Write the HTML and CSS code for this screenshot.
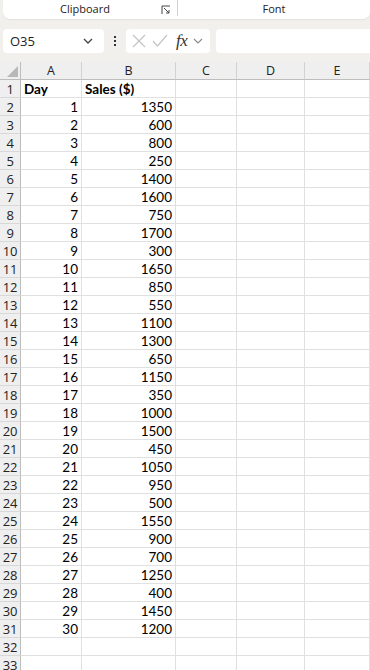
FILE: index.html
```html
<!DOCTYPE html>
<html>
<head>
<meta charset="utf-8">
<link rel="stylesheet" href="styles.css">
</head>
<body>
<div class="app">
  <div class="ribbon">
    <div class="group clip"><span>Clipboard</span>
      <svg class="launcher" width="10" height="10" viewBox="0 0 10 10"><path d="M1 9V1h8" fill="none" stroke="#444" stroke-width="1"/><path d="M3 3l5 5M8 5v3H5" fill="none" stroke="#444" stroke-width="1"/></svg>
    </div>
    <div class="group font"><span>Font</span></div>
  </div>
  <div class="fbar">
    <div class="namebox"><span>O35</span>
      <svg width="12" height="8" viewBox="0 0 12 8"><path d="M2 2l4 4 4-4" fill="none" stroke="#444" stroke-width="1.3"/></svg>
    </div>
    <div class="dots"><i></i><i></i><i></i></div>
    <div class="fxbox">
      <svg width="14" height="14" viewBox="0 0 14 14"><path d="M1 1l12 12M13 1L1 13" stroke="#c4c4c4" stroke-width="1.2"/></svg>
      <svg width="16" height="14" viewBox="0 0 16 14"><path d="M1 7l4.5 5L15 1" fill="none" stroke="#c4c4c4" stroke-width="1.2"/></svg>
      <span class="fx">fx</span>
      <svg width="10" height="8" viewBox="0 0 10 8"><path d="M1 2l4 4 4-4" fill="none" stroke="#888" stroke-width="1.1"/></svg>
    </div>
    <div class="finput"></div>
  </div>
  <div class="sheet" id="sheet">
    <div class="corner"></div>
    <div class="ch">A</div><div class="ch">B</div><div class="ch">C</div><div class="ch">D</div><div class="ch">E</div>
  </div>
</div>
<script>
var sales=[1350,600,800,250,1400,1600,750,1700,300,1650,850,550,1100,1300,650,1150,350,1000,1500,450,1050,950,500,1550,900,700,1250,400,1450,1200];
var s=document.getElementById('sheet');
function cell(cls,txt){var d=document.createElement('div');d.className=cls;d.textContent=txt;s.appendChild(d);}
for(var r=1;r<=33;r++){
  cell('rh',r);
  if(r==1){cell('c b','Day');cell('c b','Sales ($)');}
  else if(r<=31){cell('c n',r-1);cell('c n',sales[r-2]);}
  else{cell('c','');cell('c','');}
  cell('c','');cell('c','');cell('c last','');
}
</script>
</body>
</html>
```
FILE: styles.css
```css
html,body{margin:0;padding:0;}
body{background:#f1f0ec;font-family:"Open Sans","Noto Sans",sans-serif;width:370px;height:670px;overflow:hidden;}
.app{width:370px;}
.ribbon{display:flex;height:19px;margin:0 0 0 3px;background:#fff;border-radius:0 0 7px 7px;box-shadow:0 1px 1px rgba(0,0,0,0.06);}
.group{display:flex;align-items:center;justify-content:center;font-size:11px;color:#222;position:relative;height:16px;}
.clip{width:174px;border-right:1px solid #d0d0d0;}
.clip span{margin-left:0;margin-right:10px;}
.launcher{position:absolute;right:6px;top:5px;}
.font{flex:1;}
.fbar{display:flex;align-items:center;height:24px;margin-top:10px;}
.namebox{margin-left:3px;width:101px;height:24px;background:#fff;border-radius:4px;display:flex;align-items:center;justify-content:space-between;padding:0 10px 0 7px;box-sizing:border-box;font-size:13px;color:#222;}
.dots{width:22px;display:flex;flex-direction:column;align-items:center;gap:2px;}
.dots i{display:block;width:2px;height:2px;background:#333;}
.fxbox{width:84px;height:24px;background:#fff;border-radius:4px;display:flex;align-items:center;padding:0 3px 0 6px;box-sizing:border-box;gap:6px;}
.fx{font-family:"Liberation Serif","DejaVu Serif",serif;font-style:italic;font-size:17px;color:#333;margin-left:2px;letter-spacing:-0.5px;}
.finput{flex:1;height:24px;background:#fff;border-radius:4px 0 0 4px;margin-left:6px;}
.sheet{display:grid;grid-template-columns:21px 61px 94px 61px 68px 65px;grid-auto-rows:18px;margin-top:9px;background:#fff;font-family:"Lato","Open Sans",sans-serif;font-size:13.5px;color:#000;}
.corner{background:#efefef;border-right:1px solid #bdbdbd;border-bottom:1px solid #bdbdbd;box-sizing:border-box;position:relative;}
.corner::after{content:"";position:absolute;right:2px;bottom:2px;width:0;height:0;border-left:11px solid transparent;border-bottom:11px solid #b8b8b8;}
.ch{background:#efefef;border-right:1px solid #d2d2d2;border-bottom:1px solid #bdbdbd;box-sizing:border-box;text-align:center;font-family:"Open Sans","Noto Sans",sans-serif;font-size:12.5px;line-height:17px;color:#222;}
.rh{background:#efefef;border-right:1px solid #bdbdbd;border-bottom:1px solid #d8d8d8;box-sizing:border-box;text-align:center;font-family:"Open Sans","Noto Sans",sans-serif;font-size:13px;line-height:18px;color:#222;letter-spacing:-0.3px;}
.c{border-right:1px solid #e0e0e0;border-bottom:1px solid #e0e0e0;box-sizing:border-box;line-height:18px;padding:0 3px;white-space:nowrap;overflow:hidden;}
.c.b{font-weight:bold;}
.c.n{text-align:right;}
```
